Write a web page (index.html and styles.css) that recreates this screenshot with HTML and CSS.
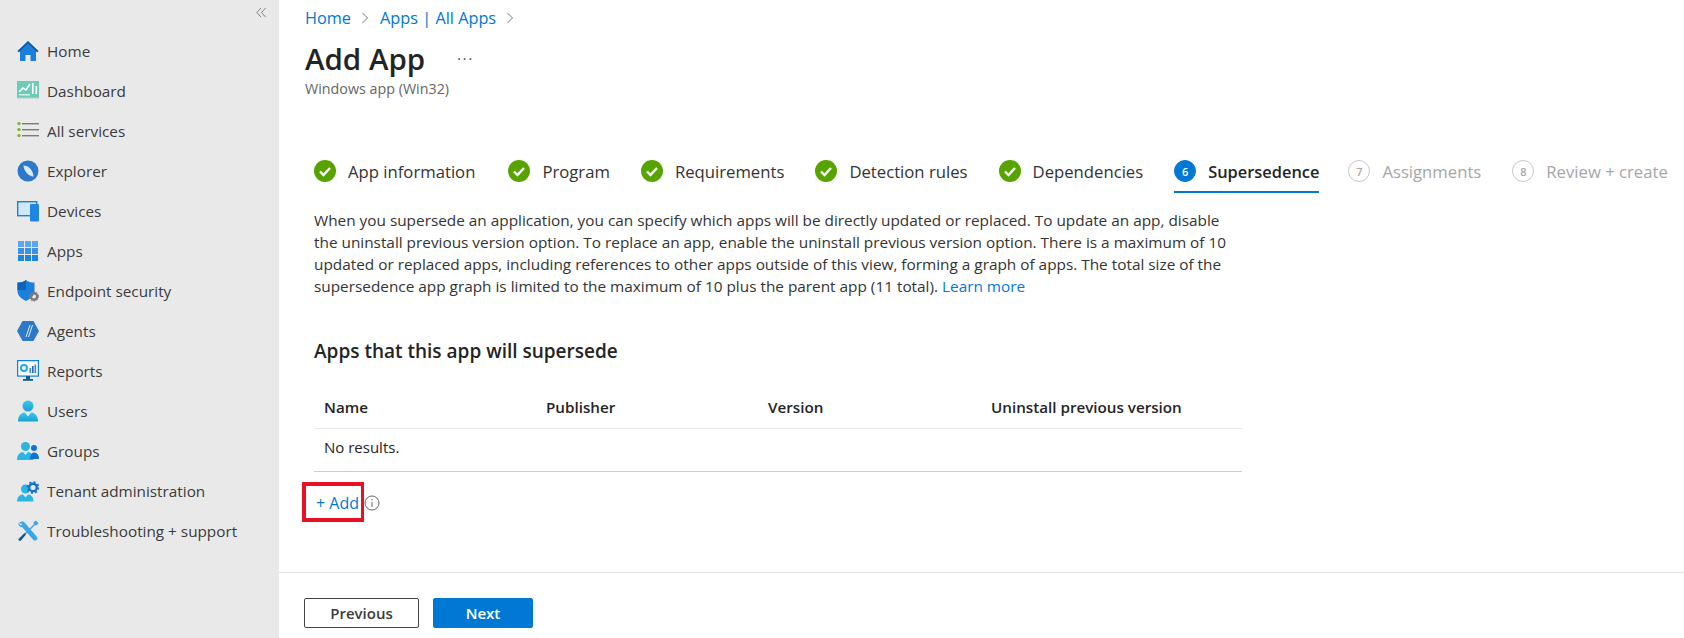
FILE: index.html
```html
<!DOCTYPE html>
<html lang="en">
<head>
<meta charset="utf-8">
<title>Add App</title>
<link rel="stylesheet" href="styles.css">
</head>
<body>
<div class="shell">
<aside class="sidebar">
  <div class="collapse"><svg width="11" height="11" viewBox="0 0 12 12"><path d="M5.500 1 L1 6 L5.500 11 M10.500 1 L6 6 L10.500 11" fill="none" stroke="#777" stroke-width="1"/></svg></div>
  <nav class="nav">
    <a class="nav-item"><svg class="nav-icon" viewBox="0 0 22 22"><path d="M11 1.500 L0.500 11.500 L3 11.500 L3 21 L8.500 21 L8.500 15 L13.500 15 L13.500 21 L19 21 L19 11.500 L21.500 11.500 Z" fill="#1a80dc"/><path d="M11 1 L0.500 11 L1.800 12.200 L11 3.600 L20.200 12.200 L21.500 11 Z" fill="#0f5a9e"/></svg>Home</a>
    <a class="nav-item"><svg class="nav-icon" viewBox="0 0 22 22"><rect y="1" width="22" height="16" fill="#6fcbb9"/><rect y="17" width="22" height="1.400" fill="#9fc9c0"/><path d="M2 12 L6 8 L9 10 L13 4" fill="none" stroke="#fff" stroke-width="1.500"/><rect x="15" y="3" width="1.600" height="11" fill="#fff"/><rect x="18.500" y="6" width="1.600" height="8" fill="#fff"/><rect x="2" y="14" width="11" height="1.500" fill="#d6f0ea"/></svg>Dashboard</a>
    <a class="nav-item"><svg class="nav-icon" viewBox="0 0 22 22"><g fill="#7a7a7a"><rect x="5" y="3" width="17" height="1.400"/><rect x="5" y="9" width="17" height="1.400"/><rect x="5" y="15" width="17" height="1.400"/></g><g fill="#7db52c"><circle cx="2" cy="3.600" r="1.700"/><circle cx="2" cy="9.600" r="1.700"/><circle cx="2" cy="15.600" r="1.700"/></g></svg>All services</a>
    <a class="nav-item"><svg class="nav-icon" viewBox="0 0 22 22"><circle cx="11" cy="11" r="10.500" fill="#2d79c7"/><path d="M6.500 5.500 C11.500 5.500 16 10 16.500 16.500 C11.500 16 7 11.500 6.500 5.500 Z" fill="#d8e9f8"/></svg>Explorer</a>
    <a class="nav-item"><svg class="nav-icon" viewBox="0 0 22 22"><rect x="0.700" y="1.700" width="19" height="14" fill="#cfe8fa" stroke="#1a80dc" stroke-width="1.400"/><rect x="13" y="4" width="9" height="17.500" rx="1" fill="#1f86e0"/></svg>Devices</a>
    <a class="nav-item"><svg class="nav-icon" viewBox="0 0 22 22"><g fill="#1f86e0"><rect x="1" y="1" width="6" height="6" fill="#5ea6ea"/><rect x="8" y="1" width="6" height="6" fill="#5ea6ea"/><rect x="15" y="1" width="6" height="6" fill="#5ea6ea"/><rect x="1" y="8" width="6" height="6" fill="#3b92e4"/><rect x="8" y="8" width="6" height="6" fill="#3b92e4"/><rect x="15" y="8" width="6" height="6" fill="#3b92e4"/><rect x="1" y="15" width="6" height="6"/><rect x="8" y="15" width="6" height="6"/><rect x="15" y="15" width="6" height="6"/></g></svg>Apps</a>
    <a class="nav-item"><svg class="nav-icon" viewBox="0 0 22 22"><path d="M9 0 C11 2 14 2.500 17.500 2.500 L17.500 11 C17.500 15.500 14 18.500 9 21 C4 18.500 0.500 15.500 0.500 11 L0.500 2.500 C4 2.500 7 2 9 0 Z" fill="#1b7fdc"/><path d="M9 0 L9 10 L0.500 10 L0.500 2.500 C4 2.500 7 2 9 0 Z" fill="#0f62b5"/><circle cx="17" cy="16.500" r="3.200" fill="none" stroke="#7a7a7a" stroke-width="2.400"/><circle cx="17" cy="16.500" r="4.700" fill="none" stroke="#7a7a7a" stroke-width="1" stroke-dasharray="1.500 1.500"/></svg>Endpoint security</a>
    <a class="nav-item"><svg class="nav-icon" viewBox="0 0 22 22"><path d="M5.500 1 L16.500 1 L22 11 L16.500 21 L5.500 21 L0 11 Z" fill="#2d79c7"/><path d="M9 17 L13 5 M11.500 17 L15.500 5" stroke="#e4eef8" stroke-width="1" fill="none"/></svg>Agents</a>
    <a class="nav-item"><svg class="nav-icon" viewBox="0 0 22 22"><rect x="0.600" y="0.600" width="20.800" height="15.500" fill="#f3f9fe" stroke="#0f7fe0" stroke-width="1.200"/><circle cx="7" cy="8" r="3" fill="none" stroke="#2aa7dc" stroke-width="2"/><rect x="12.500" y="8" width="1.600" height="5" fill="#3a8ad6"/><rect x="15" y="6" width="1.600" height="7" fill="#2468b0"/><rect x="17.500" y="4.500" width="1.600" height="8.500" fill="#3a8ad6"/><rect x="9" y="16" width="4" height="3" fill="#0f5a9e"/><rect x="6" y="19" width="10" height="1.800" fill="#0f5a9e"/></svg>Reports</a>
    <a class="nav-item"><svg class="nav-icon" viewBox="0 0 22 22"><defs><linearGradient id="u" x1="0" y1="0" x2="0" y2="1"><stop offset="0" stop-color="#3cc8ea"/><stop offset="1" stop-color="#1b9fd4"/></linearGradient></defs><circle cx="11" cy="6" r="5.500" fill="url(#u)"/><path d="M1 21.500 C1 15 5 12.500 8 12.500 L11 16.500 L14 12.500 C17 12.500 21 15 21 21.500 Z" fill="url(#u)"/></svg>Users</a>
    <a class="nav-item"><svg class="nav-icon" viewBox="0 0 22 22"><circle cx="8.500" cy="6.500" r="4.500" fill="#2ab5e2"/><path d="M0 20 C0 15 3 12 6 12 L8.500 15 L11 12 C14 12 16.500 15 16.500 20 Z" fill="#2ab5e2"/><circle cx="17" cy="8" r="3" fill="#0f74d0"/><path d="M13 19 C13 15 15 12.500 17 12.500 C20 12.500 22 15 22 19 Z" fill="#0f74d0"/></svg>Groups</a>
    <a class="nav-item"><svg class="nav-icon" viewBox="0 0 22 22"><circle cx="8.500" cy="9" r="4.500" fill="#2ab5e2"/><path d="M0 21.500 C0 17 3 14.500 6 14.500 L8.500 17.500 L11 14.500 C14 14.500 16.500 17 16.500 21.500 Z" fill="#2ab5e2"/><circle cx="16" cy="7.500" r="3.800" fill="none" stroke="#0f74d0" stroke-width="2.400"/><circle cx="16" cy="7.500" r="5.500" fill="none" stroke="#0f74d0" stroke-width="1.800" stroke-dasharray="2 2.300"/></svg>Tenant administration</a>
    <a class="nav-item"><svg class="nav-icon" viewBox="0 0 22 22"><path d="M2 3 C4 1 7 1 8 3 L20 17 C21 18.500 20 20.500 18 20.500 C17 20.500 16.500 20 16 19.500 L5 7 C3 7 1 5.500 1.500 3 L4 5.500 L5.500 4 Z" fill="#3ba6e6"/><path d="M18.500 0.500 L21.500 3 L19.500 5.500 L18 5 L8 15 L7 14 L17 4 L16.500 2.500 Z" fill="#3ba6e6"/><path d="M7.500 13 L9 14.500 L4 20.500 C3 21.500 1 20.500 1.500 19 Z" fill="#16578f"/></svg>Troubleshooting + support</a>
  </nav>
</aside>
<main class="main">
  <div class="content">
    <div class="breadcrumb"><a>Home</a><svg class="crumb" viewBox="0 0 8 12"><path d="M1.500 1 L6.500 6 L1.500 11" fill="none" stroke="#777" stroke-width="1"/></svg><a>Apps | All Apps</a><svg class="crumb" viewBox="0 0 8 12"><path d="M1.500 1 L6.500 6 L1.500 11" fill="none" stroke="#777" stroke-width="1"/></svg></div>
    <div class="title-row"><h1 class="title">Add App</h1><span class="more">···</span></div>
    <div class="subtitle">Windows app (Win32)</div>
    <div class="tabs">
      <div class="tab first"><span class="done"><svg viewBox="0 0 22 22"><path d="M6 11.500 L9.500 15 L16 8" fill="none" stroke="#fff" stroke-width="2.400"/></svg></span>App information</div>
      <div class="tab"><span class="done"><svg viewBox="0 0 22 22"><path d="M6 11.500 L9.500 15 L16 8" fill="none" stroke="#fff" stroke-width="2.400"/></svg></span>Program</div>
      <div class="tab"><span class="done"><svg viewBox="0 0 22 22"><path d="M6 11.500 L9.500 15 L16 8" fill="none" stroke="#fff" stroke-width="2.400"/></svg></span>Requirements</div>
      <div class="tab"><span class="done"><svg viewBox="0 0 22 22"><path d="M6 11.500 L9.500 15 L16 8" fill="none" stroke="#fff" stroke-width="2.400"/></svg></span>Detection rules</div>
      <div class="tab"><span class="done"><svg viewBox="0 0 22 22"><path d="M6 11.500 L9.500 15 L16 8" fill="none" stroke="#fff" stroke-width="2.400"/></svg></span>Dependencies</div>
      <div class="tab active"><span class="num cur">6</span>Supersedence</div>
      <div class="tab off"><span class="num">7</span>Assignments</div>
      <div class="tab off"><span class="num">8</span>Review + create</div>
    </div>
    <section class="body">
      <p class="desc">When you supersede an application, you can specify which apps will be directly updated or replaced. To update an app, disable the uninstall previous version option. To replace an app, enable the uninstall previous version option. There is a maximum of 10 updated or replaced apps, including references to other apps outside of this view, forming a graph of apps. The total size of the supersedence app graph is limited to the maximum of 10 plus the parent app (11 total). <a class="link">Learn more</a></p>
      <h2 class="heading">Apps that this app will supersede</h2>
      <div class="table">
        <div class="row head"><span>Name</span><span>Publisher</span><span>Version</span><span>Uninstall previous version</span></div>
        <div class="row empty"><span>No results.</span></div>
      </div>
      <div class="add-row"><a class="add">+ Add</a><svg class="info" viewBox="0 0 16 16"><circle cx="8" cy="8" r="7" fill="none" stroke="#666" stroke-width="1"/><path d="M8 7 V12" stroke="#666" stroke-width="1"/><circle cx="8" cy="4.800" r="0.700" fill="#666"/></svg></div>
    </section>
  </div>
  <footer class="footer"><button class="btn">Previous</button><button class="btn primary">Next</button></footer>
</main>
</div>
</body>
</html>
```
FILE: styles.css
```css
* { box-sizing: border-box; }
html, body { margin: 0; height: 100%; }
body { font-family: "Open Sans", "Liberation Sans", sans-serif; font-size: 15px; color: #242424; background: #fff; overflow: hidden; }
.shell { display: flex; height: 638px; }
.sidebar { width: 279px; flex: none; background: #e9e9e9; padding-top: 7px; }
.collapse { display: flex; justify-content: flex-end; padding-right: 12px; height: 12px; }
.nav { display: flex; flex-direction: column; margin-top: 12px; }
.nav-item { display: flex; align-items: center; height: 40px; padding-left: 17px; font-size: 15.300px; color: #3b3b3b; gap: 8px; white-space: nowrap; }
.nav-icon { width: 22px; height: 22px; flex: none; }
.main { flex: 1; display: flex; flex-direction: column; min-width: 0; }
.content { flex: 1; padding-left: 26px; }
.breadcrumb { display: flex; align-items: center; height: 18px; margin-top: 9px; font-size: 16.300px; color: #0078d4; }
.crumb { width: 8px; height: 12px; margin: 0 11px 0 10px; }
.crumb:last-child { margin-left: 10px; }
.title-row { display: flex; align-items: center; margin-top: 13px; height: 36px; }
.title { margin: 0; font-size: 29.500px; font-weight: 600; color: #242424; }
.more { margin-left: 32px; font-size: 14px; color: #444; letter-spacing: 2px; }
.subtitle { font-size: 14.300px; line-height: 20px; color: #666; margin-top: 3px; }
.tabs { display: flex; margin-left: 9px; margin-top: 56px; height: 42px; gap: 31px; white-space: nowrap; }
.tab { display: flex; align-items: center; gap: 12px; font-size: 16.700px; height: 38px; padding-bottom: 4px; color: #333; border-bottom: 2px solid transparent; }
.tab.first { margin-right: 2px; }
.tab.active { font-weight: 600; font-size: 16.400px; border-bottom-color: #0078d4; color: #242424; margin-right: -2px; }
.tab.off { color: #a6a6a6; }
.done { width: 22px; height: 22px; border-radius: 50%; background: #57a300; flex: none; display: block; }
.done svg { display: block; }
.num { width: 22px; height: 22px; border-radius: 50%; border: 1.500px solid #c8c8c8; color: #a6a6a6; font-size: 11px; font-weight: 600; display: flex; align-items: center; justify-content: center; flex: none; }
.num.cur { background: #0078d4; border-color: #0078d4; color: #fff; }
.body { margin-left: 9px; width: 928px; }
.desc { margin: 12px 0 0; font-size: 15.350px; line-height: 22px; color: #333; }
.link { color: #0078d4; }
.heading { margin: 42px 0 0; font-size: 19px; font-weight: 600; line-height: 24px; color: #242424; }
.table { margin-top: 24px; }
.row { display: grid; grid-template-columns: 222px 222px 223px 1fr; padding-left: 10px; align-items: center; }
.head { height: 42px; padding-bottom: 2px; font-weight: 600; border-bottom: 1px solid #e8e8e8; font-size: 15.200px; }
.empty { height: 43px; padding-bottom: 6px; border-bottom: 1px solid #ccc; }
.add-row { display: flex; align-items: center; height: 40px; margin-top: 10px; margin-left: -12px; }
.add { display: flex; align-items: center; height: 40px; width: 62px; padding: 2px 0 0 10px; border: 4px solid #e81123; border-right-width: 3px; color: #0078d4; font-size: 16px; white-space: nowrap; }
.info { width: 16px; height: 16px; margin-top: 2px; }
.footer { flex: none; height: 66px; border-top: 1px solid #e0e0e0; padding: 25px 0 0 25px; display: flex; gap: 14px; align-items: flex-start; }
.btn { height: 30px; width: 115px; border: 1px solid #444; border-radius: 2px; background: #fff; font: 600 15px "Open Sans", sans-serif; color: #3b3b3b; padding: 0; }
.btn.primary { width: 100px; background: #0078d4; border-color: #0078d4; color: #fff; }
```
